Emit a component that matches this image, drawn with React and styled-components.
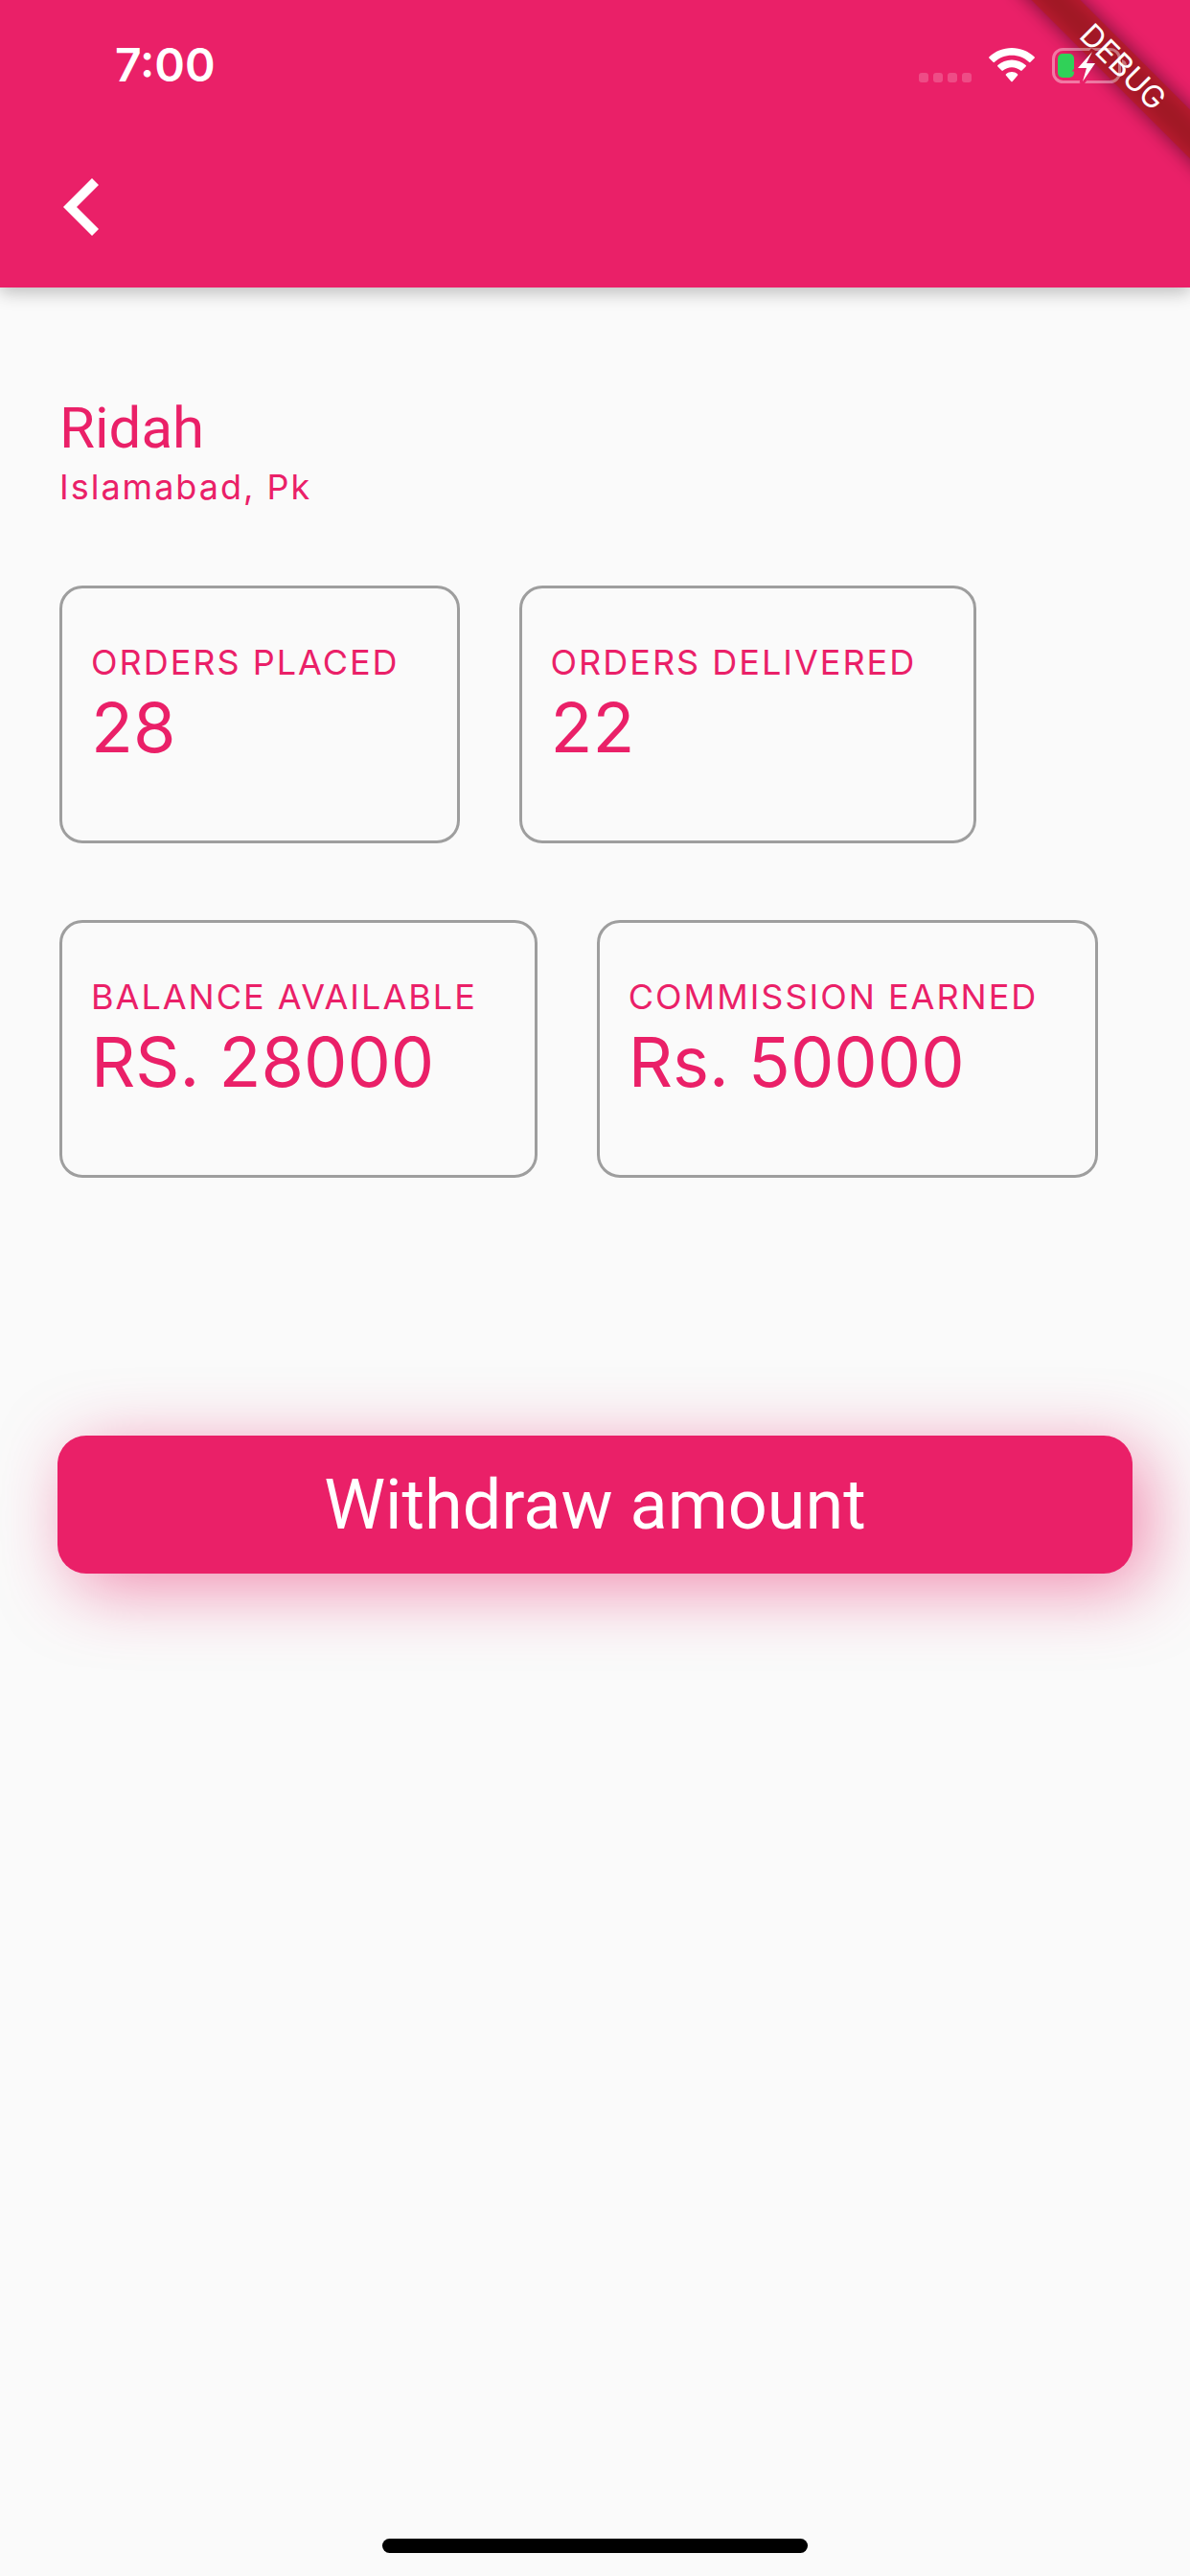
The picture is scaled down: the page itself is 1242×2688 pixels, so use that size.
import React from "react";
import styled, { createGlobalStyle } from "styled-components";

const GlobalStyle = createGlobalStyle`
	*{
		box-sizing:border-box;
	}
	body{
		margin:0;
		background:#fafafa;
		font-family:Inter, "Liberation Sans", sans-serif;
	}
`;

const pink = "#ea2068";
const displayFont = `Roboto, "Liberation Sans", sans-serif`;

const stats = [
	[
		{ label: "ORDERS PLACED", value: "28" },
		{ label: "ORDERS DELIVERED", value: "22" },
	],
	[
		{ label: "BALANCE AVAILABLE", value: "RS. 28000" },
		{ label: "COMMISSION EARNED", value: "Rs. 50000" },
	],
];

const SignalDots = () => (
	<Signal aria-hidden="true">
		<i />
		<i />
		<i />
		<i />
	</Signal>
);

const WifiIcon = () => (
	<svg width="48" height="36" viewBox="0 0 48 36" fill="#fff" aria-hidden="true">
		<path d="M24 0C33 0 41.500 3.500 47.500 9.300a1 1 0 0 1 0 1.500l-4 4a1 1 0 0 1-1.500 0C37.200 10.300 30.900 7.700 24 7.700S10.800 10.300 6 14.800a1 1 0 0 1-1.500 0l-4-4a1 1 0 0 1 0-1.500C6.500 3.500 15 0 24 0z" />
		<path d="M24 12.500c5.600 0 10.700 2.100 14.600 5.600a1 1 0 0 1 0 1.500l-4 4a1 1 0 0 1-1.500 0C30.700 21.500 27.500 20.200 24 20.200s-6.700 1.300-9.100 3.400a1 1 0 0 1-1.500 0l-4-4a1 1 0 0 1 0-1.500C13.300 14.600 18.400 12.500 24 12.500z" />
		<path d="M24 25c2.200 0 4.300.8 6 2.200a1 1 0 0 1 0 1.500L24.700 35a1 1 0 0 1-1.400 0L18 28.700a1 1 0 0 1 0-1.500C19.700 25.800 21.800 25 24 25z" />
	</svg>
);

const BatteryIcon = () => (
	<svg width="78" height="37" viewBox="0 0 78 37" aria-hidden="true">
		<mask id="boltGap">
			<rect width="78" height="37" fill="#fff" />
			<path d="M43 2 26 22h9l-4 15L47 15h-9z" fill="#000" stroke="#000" strokeWidth="5" />
		</mask>
		<g mask="url(#boltGap)">
			<rect x="1.500" y="1.500" width="69" height="34" rx="10" fill="none" stroke="#fff" strokeOpacity=".4" strokeWidth="3" />
			<rect x="6" y="6" width="17" height="25" rx="5" fill="#30d158" />
		</g>
		<path d="M73 12c3 1 5 3 5 6.500s-2 5.500-5 6.500z" fill="#fff" fillOpacity=".4" />
		<path d="M42 4 27 21h9l-4 14L45 16h-9z" fill="#fff" />
	</svg>
);

const BackIcon = () => (
	<svg width="37" height="60" viewBox="0 0 37 60" fill="#fff" aria-hidden="true">
		<path d="M30 0l7 7-23 23 23 23-7 7L0 30z" />
	</svg>
);

const App = () => {
	return (
		<Page>
			<GlobalStyle />
			<Ribbon>
				<span>DEBUG</span>
			</Ribbon>
			<Header>
				<StatusBar>
					<Time>7:00</Time>
					<StatusIcons>
						<SignalDots />
						<WifiIcon />
						<BatteryIcon />
					</StatusIcons>
				</StatusBar>
				<Toolbar>
					<BackButton type="button" aria-label="Back">
						<BackIcon />
					</BackButton>
				</Toolbar>
			</Header>
			<Content>
				<Profile>
					<Name>Ridah</Name>
					<Place>Islamabad, Pk</Place>
				</Profile>
				{stats.map((row) => (
					<CardRow key={row[0].label}>
						{row.map((stat) => (
							<Card key={stat.label}>
								<Label>{stat.label}</Label>
								<Value>{stat.value}</Value>
							</Card>
						))}
					</CardRow>
				))}
				<WithdrawButton type="button">Withdraw amount</WithdrawButton>
			</Content>
			<Footer>
				<HomeIndicator />
			</Footer>
		</Page>
	);
};

const Page = styled.div`
	position:relative;
	display:flex;
	flex-direction:column;
	min-height:100vh;
	overflow:hidden;
	color:${pink};
`;

const Header = styled.header`
	background:${pink};
	box-shadow:0 6px 15px rgba(0,0,0,0.16), 0 3px 24px rgba(0,0,0,0.1);
`;

const StatusBar = styled.div`
	position:relative;
	z-index:2;
	display:flex;
	align-items:center;
	justify-content:space-between;
	height:132px;
	padding:4px 66px 0 120px;
`;

const Time = styled.time`
	color:#fff;
	font-size:48px;
	font-weight:600;
	line-height:60px;
`;

const StatusIcons = styled.div`
	display:flex;
	align-items:center;
	gap:18px;
	svg{
		display:block;
	}
`;

const Signal = styled.span`
	display:flex;
	align-items:flex-end;
	gap:5px;
	height:36px;
	i{
		width:10px;
		height:10px;
		border-radius:3px;
		background:rgba(255,255,255,0.2);
	}
`;

const Toolbar = styled.nav`
	display:flex;
	align-items:center;
	height:168px;
	padding:0 66px;
`;

const BackButton = styled.button`
	display:flex;
	padding:0;
	border:none;
	background:none;
	cursor:pointer;
`;

// Corner ribbon, lies over the header
const Ribbon = styled.div`
	position:absolute;
	z-index:1;
	top:52px;
	right:-80px;
	width:300px;
	height:36px;
	transform:rotate(45deg);
	color:#fff;
	font-size:32px;
	line-height:36px;
	text-align:center;
	&::before{
		content:"";
		position:absolute;
		inset:0;
		background:rgba(0,0,0,0.5);
		filter:blur(10px);
	}
	span{
		position:relative;
		display:block;
		background:rgba(183,28,28,0.64);
	}
`;

const Content = styled.main`
	display:flex;
	flex:1;
	flex-direction:column;
	gap:80px;
	padding:109px 60px 0;
`;

const Profile = styled.section`
	padding:0 2px;
`;

const Name = styled.h1`
	margin:0;
	font-family:${displayFont};
	font-size:60px;
	font-weight:400;
	line-height:76px;
`;

const Place = styled.p`
	margin:0;
	font-size:36px;
	line-height:46px;
	letter-spacing:2px;
`;

const CardRow = styled.section`
	display:flex;
	gap:62px;
	padding:0 2px;
`;

const Card = styled.article`
	padding:54px 60px 73px 30px;
	border:3px solid #9e9e9e;
	border-radius:24px;
`;

const Label = styled.h2`
	margin:0;
	font-size:36px;
	font-weight:400;
	line-height:46px;
	letter-spacing:2px;
`;

const Value = styled.p`
	margin:0;
	font-size:72px;
	line-height:90px;
`;

const WithdrawButton = styled.button`
	height:144px;
	margin-top:189px;
	border:none;
	border-radius:30px;
	background:${pink};
	box-shadow:15px 15px 72px rgba(234,32,104,0.5);
	color:#fff;
	font-family:${displayFont};
	font-size:72px;
	cursor:pointer;
`;

const Footer = styled.footer`
	display:flex;
	justify-content:center;
	padding:24px;
`;

const HomeIndicator = styled.div`
	width:444px;
	height:15px;
	border-radius:8px;
	background:#000;
`;

export default App;
